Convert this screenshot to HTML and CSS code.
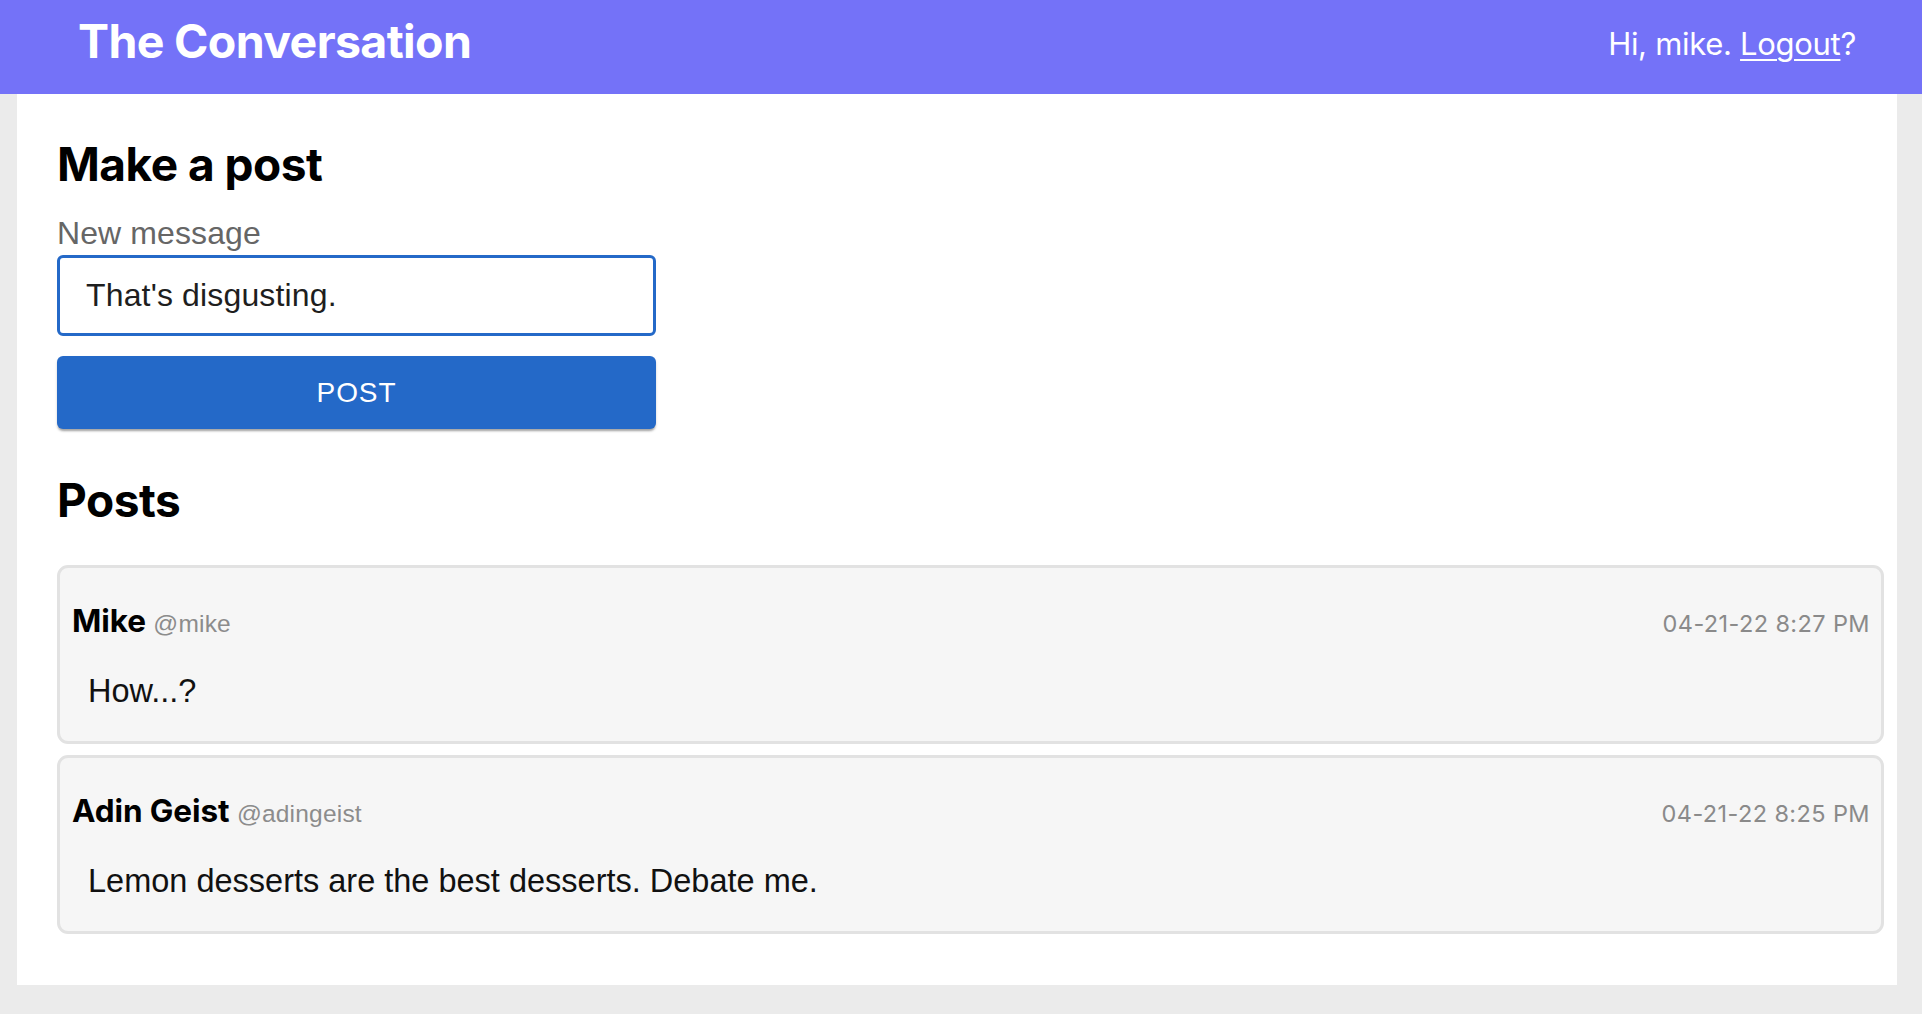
FILE: index.html
```html
<!DOCTYPE html>
<html lang="en">
<head>
<meta charset="utf-8">
<title>The Conversation</title>
<link rel="stylesheet" href="styles.css">
</head>
<body>
<header class="topbar">
  <div class="brand">The Conversation</div>
  <div class="greeting">Hi, mike. <a href="#" class="logout">Logout</a>?</div>
</header>
<main class="page">
  <h2 class="heading">Make a post</h2>
  <form class="post-form">
    <label class="field-label" for="msg">New message</label>
    <input id="msg" class="field-input" type="text" value="That's disgusting.">
    <button type="button" class="post-btn">POST</button>
  </form>
  <h2 class="heading posts-heading">Posts</h2>
  <section class="posts">
    <article class="card">
      <div class="card-head">
        <div class="who"><span class="name">Mike</span> <span class="handle">@mike</span></div>
        <div class="date">04-21-22 8:27 PM</div>
      </div>
      <p class="msg">How...?</p>
    </article>
    <article class="card">
      <div class="card-head">
        <div class="who"><span class="name">Adin Geist</span> <span class="handle">@adingeist</span></div>
        <div class="date">04-21-22 8:25 PM</div>
      </div>
      <p class="msg">Lemon desserts are the best desserts. Debate me.</p>
    </article>
  </section>
</main>
</body>
</html>
```
FILE: styles.css
```css
* { box-sizing: border-box; }
html, body { margin: 0; padding: 0; }
body {
  background: #ebebeb;
  font-family: Inter, "Noto Sans", sans-serif;
  color: #000;
  min-height: 1014px;
}
.topbar {
  height: 94px;
  background: #7472f8;
  color: #fff;
  display: flex;
  align-items: center;
  justify-content: space-between;
  padding: 0 66px 0 78px;
}
.brand {
  font-family: Inter, sans-serif;
  font-weight: 700;
  font-size: 46.5px;
  letter-spacing: -0.65px;
  line-height: 56px;
  margin-top: -12px;
}
.greeting {
  font-family: Inter, sans-serif;
  font-size: 31px;
  line-height: 40px;
  margin-top: -6px;
  letter-spacing: -0.3px;
}
.logout { color: #fff; text-decoration: underline; text-underline-offset: 4px; text-decoration-thickness: 2px; }
.page {
  margin-left: 17px;
  width: 1880px;
  background: #fff;
  padding: 42px 13px 51px 40px;
}
.heading {
  margin: 0;
  font-family: Inter, sans-serif;
  font-weight: 700;
  font-size: 46px;
  line-height: 56px;
  letter-spacing: -0.5px;
}
.post-form {
  width: 599px;
  display: flex;
  flex-direction: column;
  padding-top: 25px;
}
.field-label {
  font-family: "Liberation Sans", Arial, sans-serif;
  font-size: 32px;
  line-height: 32px;
  letter-spacing: 0.1px;
  color: #666;
}
.field-input {
  margin-top: 6px;
  height: 81px;
  border: 3px solid #2469c8;
  border-radius: 6px;
  padding: 0 22px 0 26px;
  font-family: "Liberation Sans", Arial, sans-serif;
  font-size: 32px;
  letter-spacing: 0.15px;
  color: #1e1e1e;
  outline: none;
  background: #fff;
}
.post-btn {
  margin-top: 20px;
  height: 73px;
  border: none;
  border-radius: 6px;
  background: #2469c8;
  color: #fff;
  font-family: "Liberation Sans", Arial, sans-serif;
  font-size: 28px;
  letter-spacing: 0.9px;
  box-shadow: 0 3px 2px -1px rgba(0,0,0,0.25), 0 2px 3px rgba(0,0,0,0.15);
}
.posts-heading { margin-top: 43px; }
.posts {
  margin-top: 37px;
  display: flex;
  flex-direction: column;
  gap: 11px;
}
.card {
  height: 179px;
  background: #f6f6f6;
  border: 3px solid #e2e2e2;
  border-radius: 11px;
  padding: 35px 11px 0 12px;
}
.card-head {
  display: flex;
  justify-content: space-between;
  align-items: baseline;
  line-height: 36px;
}
.name {
  font-family: Inter, sans-serif;
  font-weight: 700;
  font-size: 31.5px;
  letter-spacing: -0.1px;
}
.handle {
  font-family: "Liberation Sans", Arial, sans-serif;
  font-size: 24.5px;
  letter-spacing: 0.2px;
  color: #8c8c8c;
  margin-left: 3px;
}
.date {
  font-family: Inter, sans-serif;
  font-size: 23.5px;
  color: #8a8a8a;
  letter-spacing: 0.4px;
}
.msg {
  margin: 29px 0 0 16px;
  font-family: "Liberation Sans", Arial, sans-serif;
  font-size: 32.5px;
  line-height: 36px;
  color: #111;
}
```
